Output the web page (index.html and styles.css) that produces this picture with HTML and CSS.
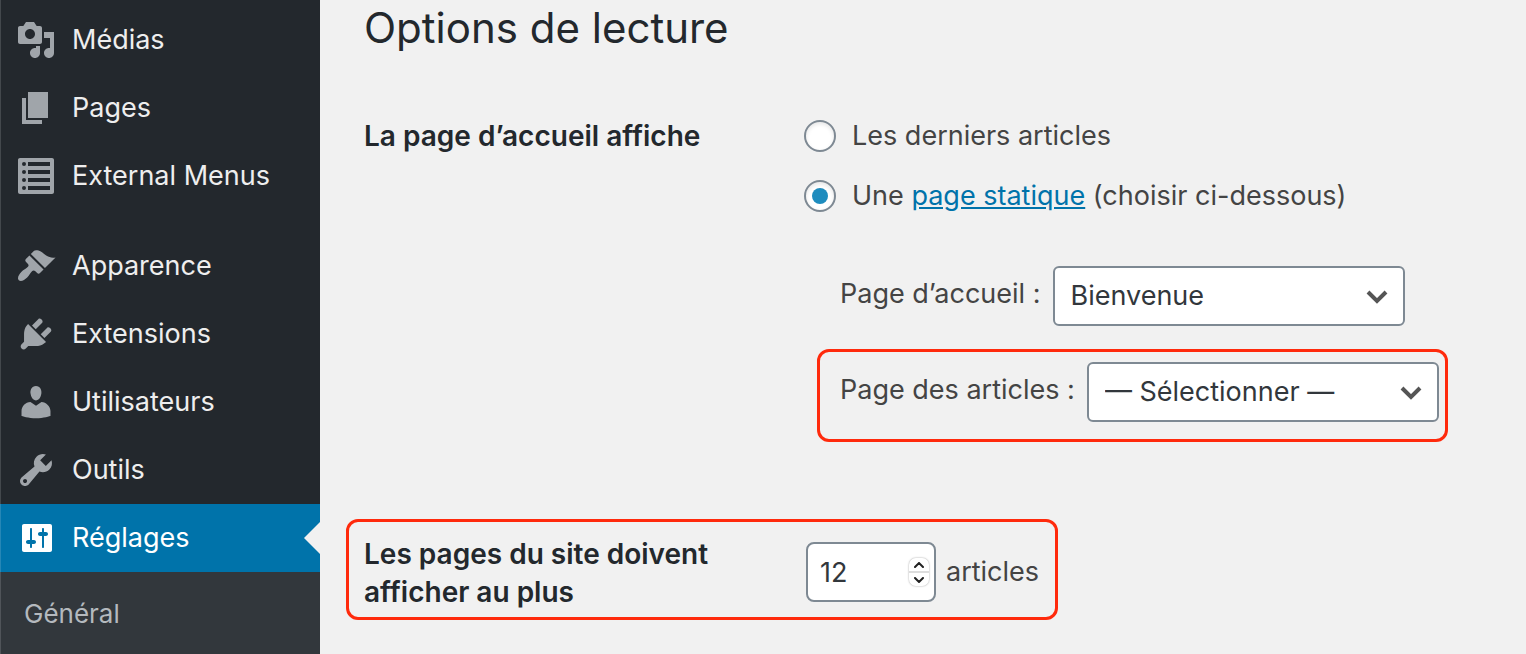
FILE: index.html
```html
<!DOCTYPE html>
<html lang="fr">
<head>
<meta charset="utf-8">
<meta name="viewport" content="width=device-width, initial-scale=1.0">
<title>Options de lecture</title>
<link rel="stylesheet" href="styles.css">
</head>
<body>
<nav class="sidebar" aria-label="Menu principal">
  <ul class="menu">
    <li><a href="#">
      <svg class="icon" viewBox="0 0 20 20"><path d="M13 11V4c0-.55-.45-1-1-1h-1.67L9 1H5L3.67 3H2c-.55 0-1 .45-1 1v7c0 .55.45 1 1 1h10c.55 0 1-.45 1-1zM7 4.5c1.38 0 2.5 1.12 2.5 2.5S8.38 9.5 7 9.5 4.5 8.38 4.5 7 5.62 4.5 7 4.5zM14 6h5v10.5c0 1.38-1.12 2.5-2.5 2.5S14 17.88 14 16.5s1.12-2.5 2.5-2.5c.17 0 .34.02.5.05V9h-3V6zm-4 8.05V13h2v3.5c0 1.38-1.12 2.5-2.5 2.5S7 17.88 7 16.5 8.12 14 9.5 14c.17 0 .34.02.5.05z"/></svg>
      Médias</a></li>
    <li><a href="#">
      <svg class="icon" viewBox="0 0 20 20"><path d="M6 15V2h10v13H6zm-1 1h8v2H3V5h2v11z"/></svg>
      Pages</a></li>
    <li><a href="#">
      <svg class="icon" viewBox="0 0 20 20"><path fill-rule="evenodd" d="M2 1h16c.55 0 1 .45 1 1v16c0 .55-.45 1-1 1H2c-.55 0-1-.45-1-1V2c0-.55.45-1 1-1zM6 3v2h11V3zM6 7v2h11V7zM6 11v2h11v-2zM6 15v2h11v-2zM3 4a1 1 0 1 0 2 0 1 1 0 1 0-2 0zM3 8a1 1 0 1 0 2 0 1 1 0 1 0-2 0zM3 12a1 1 0 1 0 2 0 1 1 0 1 0-2 0zM3 16a1 1 0 1 0 2 0 1 1 0 1 0-2 0z"/></svg>
      External Menus</a></li>
    <li class="separator" role="separator"></li>
    <li><a href="#">
      <svg class="icon" viewBox="0 0 20 20"><path d="M14.48 11.06L7.41 3.99l1.5-1.5c.5-.56 2.3-.47 3.51.32 1.21.8 1.43 1.28 2.91 2.1 1.18.64 2.45 1.26 4.45.85zm-.71.71L6.7 4.7 4.93 6.47c-.39.39-.39 1.02 0 1.41l1.06 1.06c.39.39.39 1.03 0 1.42-.6.6-1.43 1.11-2.21 1.69-.35.26-.7.53-1.01.84C1.43 14.23.4 16.08 1.4 17.07c.99 1 2.84-.03 4.18-1.36.31-.31.58-.66.85-1.02.57-.78 1.08-1.61 1.69-2.21.39-.39 1.02-.39 1.41 0l1.06 1.06c.39.39 1.02.39 1.41 0z"/></svg>
      Apparence</a></li>
    <li><a href="#">
      <svg class="icon" viewBox="0 0 20 20"><path d="M13.11 4.36L9.87 7.6 8 5.73l3.24-3.24c.35-.34 1.05-.2 1.56.32.52.51.66 1.21.31 1.55zm-8 1.77l.91-1.12 9.01 9.01-1.19.84c-.71.71-2.63 1.16-3.82 1.16H6.14L4.9 17.26c-.59.59-1.54.59-2.12 0-.59-.58-.59-1.53 0-2.12l1.24-1.24v-3.88c0-1.13.4-3.19 1.09-3.89zm7.26 3.97l3.24-3.24c.34-.35 1.04-.21 1.55.31.52.51.66 1.21.31 1.55l-3.24 3.25z"/></svg>
      Extensions</a></li>
    <li><a href="#">
      <svg class="icon" viewBox="0 0 20 20"><path d="M10 9.25c-2.27 0-2.73-3.44-2.73-3.44C7 4.02 7.82 2 9.97 2c2.16 0 2.98 2.02 2.71 3.81 0 0-.41 3.44-2.68 3.44zm0 2.57L12.72 10c2.39 0 4.52 2.33 4.52 4.53v2.49s-3.65 1.13-7.24 1.13c-3.65 0-7.24-1.13-7.24-1.13v-2.49c0-2.25 1.94-4.48 4.47-4.48z"/></svg>
      Utilisateurs</a></li>
    <li><a href="#">
      <svg class="icon" viewBox="0 0 20 20"><path d="M16.68 9.77c-1.34 1.34-3.3 1.67-4.95.99l-5.41 6.52c-.99.99-2.59.99-3.58 0s-.99-2.59 0-3.57l6.52-5.42c-.68-1.65-.35-3.61.99-4.95 1.28-1.28 3.12-1.62 4.72-1.06l-2.89 2.89 2.82 2.82 2.86-2.87c.53 1.58.18 3.39-1.08 4.65zM3.81 16.21c.4.39 1.04.39 1.43 0 .4-.4.4-1.04 0-1.43-.39-.4-1.03-.4-1.43 0-.39.39-.39 1.03 0 1.43z"/></svg>
      Outils</a></li>
    <li class="current"><a href="#" aria-current="page">
      <svg class="icon" viewBox="0 0 20 20"><path d="M18 16V4c0-.55-.45-1-1-1H4c-.55 0-1 .45-1 1v12c0 .55.45 1 1 1h13c.55 0 1-.45 1-1zM8 11h1c.55 0 1 .45 1 1s-.45 1-1 1H8v1.5c0 .28-.22.5-.5.5s-.5-.22-.5-.5V13H6c-.55 0-1-.45-1-1s.45-1 1-1h1V5.5c0-.28.22-.5.5-.5s.5.22.5.5V11zm5-2h-1c-.55 0-1-.45-1-1s.45-1 1-1h1V5.5c0-.28.22-.5.5-.5s.5.22.5.5V7h1c.55 0 1 .45 1 1s-.45 1-1 1h-1v5.5c0 .28-.22.5-.5.5s-.5-.22-.5-.5V9z"/></svg>
      Réglages</a></li>
  </ul>
  <ul class="submenu">
    <li><a href="#">Général</a></li>
  </ul>
</nav>

<main class="content">
  <h1>Options de lecture</h1>
  <form>
    <div class="row" role="group" aria-labelledby="front-title">
      <div class="row-title" id="front-title">La page d’accueil affiche</div>
      <div class="row-field">
        <label class="choice"><input type="radio" name="show_on_front" value="posts"> Les derniers articles</label>
        <div class="choice">
          <input type="radio" name="show_on_front" id="front-page" value="page" checked>
          <label for="front-page">Une <a href="#">page statique</a> (choisir ci-dessous)</label>
        </div>
        <div class="pick">
          <label for="page_on_front">Page d’accueil :</label>
          <span class="select">
            <select id="page_on_front"><option>Bienvenue</option></select>
            <svg viewBox="0 0 24 14"><path d="M3 2l9 9 9-9"/></svg>
          </span>
        </div>
        <div class="pick highlight">
          <label for="page_for_posts">Page des articles :</label>
          <span class="select">
            <select id="page_for_posts"><option>— Sélectionner —</option></select>
            <svg viewBox="0 0 24 14"><path d="M3 2l9 9 9-9"/></svg>
          </span>
        </div>
      </div>
    </div>
    <div class="row row-posts highlight">
      <label class="row-title" for="posts_per_page">Les pages du site doivent afficher au plus</label>
      <div class="row-field count">
        <span class="number">
          <input type="number" id="posts_per_page" min="1" value="12">
          <span class="stepper">
            <button type="button" aria-label="Augmenter" onclick="posts_per_page.stepUp()"><svg viewBox="0 0 10 6"><path d="M1 5l4-4 4 4"/></svg></button>
            <button type="button" aria-label="Diminuer" onclick="posts_per_page.stepDown()"><svg viewBox="0 0 10 6"><path d="M1 1l4 4 4-4"/></svg></button>
          </span>
        </span>
        <span>articles</span>
      </div>
    </div>
  </form>
</main>
</body>
</html>
```
FILE: styles.css
```css
* {
  box-sizing: border-box;
}
body {
  margin: 0;
  min-height: 100vh;
  display: flex;
  background: #f1f1f1;
  color: #444;
  font-family: Inter, "Liberation Sans", sans-serif;
  font-size: 27px;
  line-height: 38px;
}
ul {
  list-style: none;
  margin: 0;
  padding: 0;
}

/* Menu */
.sidebar {
  position: relative;
  flex: 0 0 320px;
  background: #23282d;
}
.sidebar::before {
  content: "";
  position: absolute;
  z-index: 1;
  top: 0;
  bottom: 0;
  left: 0;
  width: 1px;
  background: rgba(255, 255, 255, 0.15);
}
.menu {
  padding-top: 6px;
}
.menu a {
  display: flex;
  align-items: center;
  gap: 16px;
  height: 68px;
  padding-left: 16px;
  color: #eee;
  text-decoration: none;
}
.icon {
  width: 40px;
  height: 40px;
  fill: #a0a5aa;
}
.separator {
  height: 22px;
}
.current {
  position: relative;
  background: #0073aa;
}
.menu .current a {
  color: #fff;
}
.current .icon {
  fill: #fff;
}
.current::after {
  content: "";
  position: absolute;
  right: 0;
  top: 18px;
  border: 16px solid transparent;
  border-left-width: 0;
  border-right-color: #f1f1f1;
}
.submenu {
  min-height: 82px;
  padding: 23px 24px;
  background: #32373c;
}
.submenu a {
  color: #b4b9be;
  font-size: 26px;
  text-decoration: none;
}

/* Page */
.content {
  flex: 1;
  min-width: 0;
  padding: 0 44px 34px;
}
h1 {
  margin: 0 0 61px;
  color: #23282d;
  font-size: 42px;
  font-weight: 400;
  line-height: 56px;
}
.row {
  display: flex;
}
.row-title {
  flex: 0 0 440px;
  padding-right: 60px;
  color: #23282d;
  font-size: 28px;
  font-weight: 600;
}
.choice {
  display: flex;
  align-items: center;
  gap: 16px;
  margin-bottom: 22px;
}
.choice a {
  color: #0073aa;
}
input[type="radio"] {
  appearance: none;
  flex: none;
  display: grid;
  place-items: center;
  width: 32px;
  height: 32px;
  margin: 0;
  border: 2px solid #7e8993;
  border-radius: 50%;
  background: #fff;
  box-shadow: inset 0 2px 4px rgba(0, 0, 0, 0.1);
}
input[type="radio"]:checked::before {
  content: "";
  width: 16px;
  height: 16px;
  border-radius: 50%;
  background: #1e8cbe;
}
.pick {
  display: flex;
  align-items: center;
  gap: 12px;
  width: fit-content;
  margin: 51px 0 0 36px;
}
.pick label {
  padding-bottom: 4px;
}
.highlight {
  border: 3px solid #ff2a0c;
  border-radius: 12px;
}
.pick.highlight {
  margin: 23px 0 0 13px;
  padding: 10px 6px 17px 20px;
}
.select {
  position: relative;
}
select,
input[type="number"] {
  display: block;
  height: 60px;
  margin: 0;
  border: 2px solid #7e8993;
  border-radius: 6px;
  background: #fff;
  color: #32373c;
  font: inherit;
}
select {
  appearance: none;
  width: 352px;
  padding: 0 48px 0 16px;
}
.select svg {
  position: absolute;
  right: 16px;
  top: 24px;
  width: 24px;
  height: 14px;
  fill: none;
  stroke: #555;
  stroke-width: 4;
  pointer-events: none;
}

.row-posts {
  align-items: center;
  width: fit-content;
  margin: 77px 0 0 -18px;
  padding: 13px 16px 6px 15px;
}
.count {
  display: flex;
  align-items: center;
  gap: 10px;
  padding: 0 0 2px 2px;
}
.number {
  position: relative;
}
input[type="number"] {
  appearance: textfield;
  width: 130px;
  padding: 0 32px 0 12px;
  border-radius: 8px;
}
input[type="number"]::-webkit-inner-spin-button {
  appearance: none;
}
.stepper {
  position: absolute;
  right: 7px;
  top: 16px;
  display: grid;
  gap: 2px;
  width: 20px;
  height: 28px;
  border-radius: 7px;
  background: #ddd;
  box-shadow: 0 0 2px rgba(0, 0, 0, 0.4);
  overflow: hidden;
}
.stepper button {
  display: grid;
  place-items: center;
  padding: 0;
  border: 0;
  background: #fff;
}
.stepper svg {
  width: 10px;
  height: 6px;
  fill: none;
  stroke: #222;
  stroke-width: 2;
  stroke-linecap: round;
}
```
